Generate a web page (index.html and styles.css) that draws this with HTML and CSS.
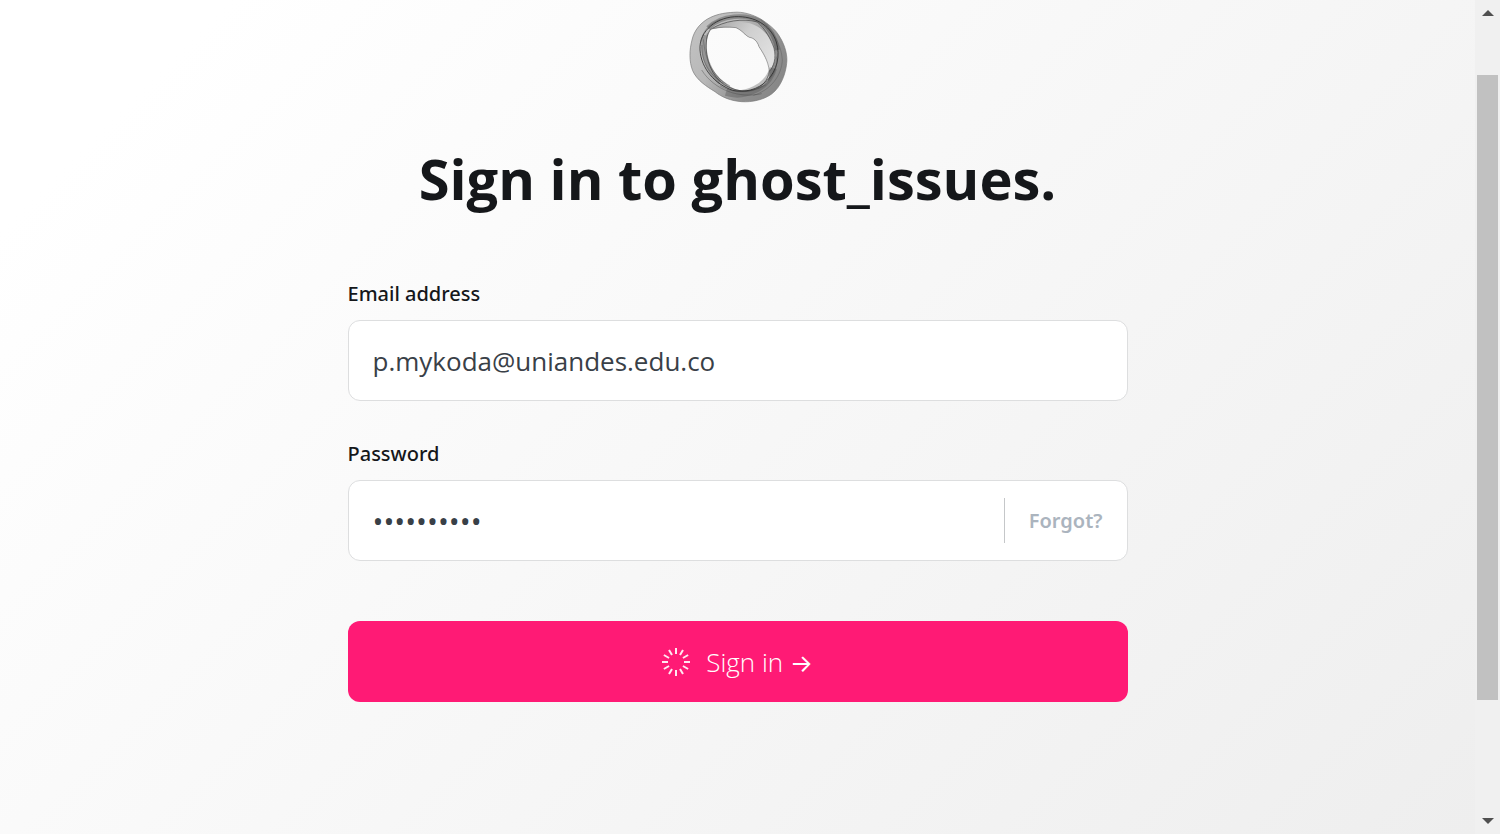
FILE: index.html
```html
<!DOCTYPE html>
<html lang="en">
<head>
<meta charset="utf-8">
<meta name="viewport" content="width=device-width, initial-scale=1">
<title>Sign in</title>
<link rel="stylesheet" href="styles.css">
</head>
<body>
<main class="page">
  <form class="signin">
    <svg class="logo" viewBox="0 0 360 336" aria-hidden="true">
      <defs>
        <linearGradient id="smoke" x1="0" y1=".2" x2="1" y2=".8">
          <stop offset="0" stop-color="#c2c2c2"/>
          <stop offset=".35" stop-color="#b8b8b8"/>
          <stop offset=".75" stop-color="#8e8e8e"/>
          <stop offset="1" stop-color="#868686"/>
        </linearGradient>
        <linearGradient id="veil" x1="0" y1="0" x2="1" y2=".6">
          <stop offset="0" stop-color="#a4a4a4"/>
          <stop offset=".5" stop-color="#cfcfcf"/>
          <stop offset="1" stop-color="#e0e0e0"/>
        </linearGradient>
      </defs>
      <path fill="url(#smoke)" fill-rule="evenodd" d="M160 37C190 34 220 45 240 56C262 70 288 88 300 112C316 138 323 168 320 190C317 220 304 260 275 282C250 300 215 307 185 305C155 303 125 292 105 275C80 260 50 240 38 212C27 185 28 150 36 120C42 92 62 66 92 52C115 41 140 38 160 37ZM92 90C78 112 76 155 86 185C98 220 132 252 165 267C195 276 232 270 258 250C270 240 270 215 266 195C260 180 250 160 237 140C232 124 222 114 208 112C194 105 188 92 168 83C150 82 112 82 92 90Z"/>
      <path fill="url(#veil)" d="M98 86C120 66 165 60 210 70C250 82 282 120 286 165C286 185 276 205 268 214C264 180 245 158 237 140C232 124 222 114 208 112C194 105 188 92 168 83C145 80 118 82 98 86Z"/>
      <g fill="none" stroke-linejoin="round">
        <path stroke="#444" stroke-opacity=".4" stroke-width="14" d="M84 84C124 44 200 40 244 66C270 84 286 112 293 150"/>
        <path stroke="#444" stroke-opacity=".32" stroke-width="22" d="M280 205C264 262 196 294 138 277"/>
        <path stroke="#444" stroke-opacity=".32" stroke-width="12" d="M74 105C60 150 78 210 120 247"/>
        <path stroke="#777" stroke-width="2" d="M160 37C190 34 220 45 240 56C262 70 288 88 300 112C316 138 323 168 320 190C317 220 304 260 275 282C250 300 215 307 185 305C155 303 125 292 105 275C80 260 50 240 38 212C27 185 28 150 36 120C42 92 62 66 92 52C115 41 140 38 160 37Z"/>
        <path stroke="#222" stroke-opacity=".75" stroke-width="3" d="M60 150C56 92 112 48 176 50C235 51 275 84 289 126C302 168 290 212 263 240C234 270 192 279 158 271C104 252 64 206 60 150Z"/>
        <path stroke="#333" stroke-opacity=".6" stroke-width="3" d="M92 88C132 62 190 54 232 66C258 88 272 118 282 144C289 175 282 198 268 214C264 242 244 262 222 269C200 276 178 275 150 263C106 246 82 198 78 145C78 118 82 100 92 88Z"/>
        <path stroke="#444" stroke-opacity=".6" stroke-width="2" d="M62 125C70 90 90 70 122 58M70 118C76 175 92 225 150 258M66 135C64 180 84 222 130 250M82 100C70 155 88 218 140 254M65 210C104 272 180 296 245 281M290 170C296 206 272 246 234 266"/>
        <path stroke="#444" stroke-opacity=".6" stroke-width="2" d="M98 86C118 81 144 80 168 83C188 92 194 105 208 112C222 114 232 124 237 140C250 160 264 180 268 214"/>
        <path stroke="#444" stroke-opacity=".45" stroke-width="2" d="M242 58C276 90 304 130 307 180C305 225 274 270 220 286M120 257C158 281 212 283 258 254"/>
      </g>
    </svg>
    <h1 class="title">Sign in to ghost_issues.</h1>
    <div class="field">
      <label class="label" for="email">Email address</label>
      <input class="input" id="email" type="email" value="p.mykoda@uniandes.edu.co">
    </div>
    <div class="field">
      <label class="label" for="password">Password</label>
      <div class="input password-box">
        <input class="password" id="password" type="password" value="0123456789">
        <button class="forgot" type="button">Forgot?</button>
      </div>
    </div>
    <button class="submit" type="button">
      <svg class="spinner" viewBox="-14 -14 28 28" aria-hidden="true">
        <g stroke="#fff" stroke-opacity=".9" stroke-width="2">
          <path d="M0-8V-14M0 8V14M-8 0H-14M8 0H14"/>
          <path transform="rotate(30)" d="M0-8V-14M0 8V14M-8 0H-14M8 0H14"/>
          <path transform="rotate(60)" d="M0-8V-14M0 8V14M-8 0H-14M8 0H14"/>
        </g>
      </svg>
      <span>Sign in <span class="arrow">→</span></span>
    </button>
  </form>
</main>
<div class="scrollbar" aria-hidden="true">
  <svg class="scroll-arrow" viewBox="0 0 12 6"><path d="M6 0L12 6H0Z"/></svg>
  <div class="track"><div class="thumb"></div></div>
  <svg class="scroll-arrow" viewBox="0 0 12 6"><path d="M0 0H12L6 6Z"/></svg>
</div>
</body>
</html>
```
FILE: styles.css
```css
* {
  box-sizing: border-box;
}

body {
  margin: 0;
  min-height: 100vh;
  display: flex;
  font-family: "Open Sans", "Noto Sans", sans-serif;
  color: #15171a;
}

.page {
  flex: 1;
  padding: 0 24px;
  background: linear-gradient(135deg, #fff 10%, #eee 100%);
}

.signin {
  max-width: 780px;
  margin: 0 auto;
  display: flex;
  flex-direction: column;
}

.logo {
  width: 120px;
  height: 112px;
  margin-left: 4px;
  align-self: center;
}

.title {
  margin: 24px 0 60px;
  font-size: 56px;
  line-height: 84px;
  font-weight: 700;
  text-align: center;
}

.field {
  margin-bottom: 40px;
}

.label {
  display: block;
  padding-bottom: 13px;
  font-family: "Noto Sans", sans-serif;
  font-size: 20px;
  line-height: 26px;
  font-weight: 500;
}

.title + .field {
  padding-top: 1px;
}

.input {
  display: block;
  width: 100%;
  height: 81px;
  padding: 0 24px;
  border: 1px solid #dddedf;
  border-radius: 12px;
  background: #fff;
  color: #394047;
  font-family: inherit;
  font-size: 26px;
}

.password-box {
  display: flex;
  align-items: center;
}

.password {
  flex: 1;
  min-width: 0;
  padding: 0;
  border: 0;
  background: none;
  color: inherit;
  font-family: inherit;
  font-size: 29px;
}

.forgot {
  height: 45px;
  padding: 0 0 0 24px;
  border: 0;
  border-left: 1px solid #c5c7c9;
  background: none;
  color: #abb4be;
  font-family: "Noto Sans", sans-serif;
  font-size: 20px;
  font-weight: 600;
}

.submit {
  height: 81px;
  margin-top: 20px;
  display: flex;
  align-items: center;
  justify-content: center;
  border: 0;
  border-radius: 12px;
  background: #ff1a75;
  color: #fff;
  font-family: inherit;
  font-size: 26px;
  font-weight: 300;
}

.spinner {
  width: 28px;
  height: 28px;
  margin-right: 16px;
}

.arrow {
  font-family: Inter, sans-serif;
  font-size: 24px;
  font-weight: 400;
}

.scrollbar {
  width: 25px;
  padding: 10px 2px;
  display: flex;
  flex-direction: column;
  align-items: center;
  background: #f0f0f0;
}

.scroll-arrow {
  width: 12px;
  height: 6px;
  fill: #505050;
}

.track {
  flex: 1;
  width: 100%;
  padding: 59px 0 8px;
}

.thumb {
  height: 85%;
  background: #c1c1c1;
}
```
